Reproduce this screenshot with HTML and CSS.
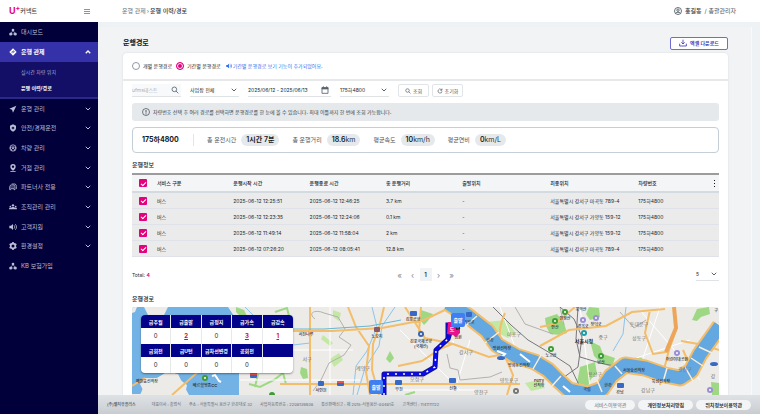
FILE: index.html
```html
<!DOCTYPE html>
<html lang="ko">
<head>
    <meta charset="UTF-8">
    <meta name="viewport" content="width=device-width, initial-scale=1.0">
    <title>U+ 커넥트 - 운행경로</title>
    <link rel="stylesheet" href="styles.css">
</head>
<body>
    <!-- shared icons -->
    <svg class="defs" aria-hidden="true">
        <symbol id="i-down" viewBox="0 0 24 24"><path d="M3 7l9 9 9-9" fill="none" stroke="currentColor" stroke-width="4"/></symbol>
        <symbol id="i-up" viewBox="0 0 24 24"><path d="M3 17l9-9 9 9" fill="none" stroke="currentColor" stroke-width="5"/></symbol>
        <symbol id="i-nodes" viewBox="0 0 24 24"><path d="M12 7L5 18h14z" fill="none" stroke="currentColor" stroke-width="2"/><circle cx="12" cy="6" r="4" fill="currentColor"/><circle cx="5" cy="18" r="4.500" fill="currentColor"/><circle cx="19" cy="18" r="4.500" fill="currentColor"/></symbol>
        <symbol id="i-route" viewBox="0 0 24 24"><path d="M12 1l11 11-11 11L1 12z" fill="currentColor"/><path d="M9 16v-5h6M13 7.500l3.500 3.500-3.500 3.500" fill="none" stroke="#3431a9" stroke-width="2"/></symbol>
        <symbol id="i-send" viewBox="0 0 24 24"><path d="M22 2L1 11l8 3 3 9z" fill="currentColor"/></symbol>
        <symbol id="i-shield" viewBox="0 0 24 24"><path d="M12 1l9 4v7c0 6-4 9-9 11-5-2-9-5-9-11V5z" fill="currentColor"/><circle cx="12" cy="12" r="4" fill="#02003a"/><circle cx="12" cy="12" r="1.500" fill="currentColor"/></symbol>
        <symbol id="i-wheel" viewBox="0 0 24 24"><circle cx="12" cy="12" r="9.500" fill="none" stroke="currentColor" stroke-width="2.500"/><path d="M3 11c5-3 13-3 18 0M8 21c0-5-1-7-5-8M16 21c0-5 1-7 5-8" fill="none" stroke="currentColor" stroke-width="2.500"/><circle cx="12" cy="13" r="3" fill="currentColor"/></symbol>
        <symbol id="i-pin" viewBox="0 0 24 24"><path d="M12 0a8 8 0 0 1 8 8c0 5-4 9-8 12-4-3-8-7-8-12a8 8 0 0 1 8-8z" fill="currentColor"/><circle cx="12" cy="8" r="3.500" fill="#02003a"/><path d="M4 22.500h16" stroke="currentColor" stroke-width="2.500"/></symbol>
        <symbol id="i-cars" viewBox="0 0 24 24"><path d="M2 20v-9l3-5h10l3 5v9h-3v-3H5v3zM8 3h11l4 7v8" fill="none" stroke="currentColor" stroke-width="2.500"/><path d="M3 12h14" stroke="currentColor" stroke-width="2"/></symbol>
        <symbol id="i-people" viewBox="0 0 24 24"><circle cx="12" cy="7" r="3.500" fill="currentColor"/><circle cx="4" cy="11" r="2.500" fill="currentColor"/><circle cx="20" cy="11" r="2.500" fill="currentColor"/><path d="M0 19c0-5 4-5 6-4 2-4 10-4 12 0 2-1 6-1 6 4z" fill="currentColor"/></symbol>
        <symbol id="i-sound" viewBox="0 0 24 24"><path d="M1 8h5l6-5v18l-6-5H1z" fill="currentColor"/><path d="M15 7c3 3 3 7 0 10M18 3c6 5 6 13 0 18" fill="none" stroke="currentColor" stroke-width="2.500"/></symbol>
        <symbol id="i-gear" viewBox="0 0 24 24"><circle cx="12" cy="12" r="7" fill="none" stroke="currentColor" stroke-width="5"/><path d="M12 0v5M12 19v5M2 6l4 2.500M18 15.500l4 2.500M2 18l4-2.500M18 8.500L22 6" stroke="currentColor" stroke-width="5"/></symbol>
        <symbol id="i-search" viewBox="0 0 24 24"><circle cx="10" cy="10" r="7" fill="none" stroke="currentColor" stroke-width="2.500"/><path d="M15 15l7 7" stroke="currentColor" stroke-width="2.500"/></symbol>
        <symbol id="i-reset" viewBox="0 0 24 24"><path d="M20 13a8 8 0 1 1-3-7l3 2M20 2v7h-7" fill="none" stroke="currentColor" stroke-width="2.500"/></symbol>
        <symbol id="i-cal" viewBox="0 0 24 24"><path d="M3 5h18v17H3z" fill="none" stroke="currentColor" stroke-width="2.500"/><path d="M2 4h20v6H2z" fill="currentColor"/><path d="M7 1v4M17 1v4" stroke="currentColor" stroke-width="3"/></symbol>
        <symbol id="i-info" viewBox="0 0 24 24"><circle cx="12" cy="12" r="10.500" fill="none" stroke="currentColor" stroke-width="2"/><path d="M12 6v8M12 16v3" stroke="currentColor" stroke-width="2.500"/></symbol>
        <symbol id="i-user" viewBox="0 0 24 24"><circle cx="12" cy="12" r="10.500" fill="none" stroke="currentColor" stroke-width="2.500"/><circle cx="12" cy="9.500" r="3.500" fill="none" stroke="currentColor" stroke-width="2.500"/><path d="M5 19c2-5 12-5 14 0" fill="none" stroke="currentColor" stroke-width="3"/></symbol>
        <symbol id="i-download" viewBox="0 0 24 24"><path d="M12 2v13M7 10l5 5 5-5M2 14v7h20v-7" fill="none" stroke="currentColor" stroke-width="2.500"/></symbol>
    </svg>

    <aside class="sidebar">
        <div class="brand">
            <span class="logo">U<sup>+</sup></span>
            <span class="logo-name">커넥트</span>
            <button class="menu-toggle" aria-label="메뉴"><i></i><i></i><i></i></button>
        </div>
        <nav>
            <a href="#" class="nav-item"><svg class="icon"><use href="#i-nodes"/></svg><span>대시보드</span></a>
            <a href="#" class="nav-item active"><svg class="icon"><use href="#i-route"/></svg><span>운행 관제</span><svg class="chev"><use href="#i-up"/></svg></a>
            <div class="submenu">
                <a href="#">실시간 차량 위치</a>
                <a href="#" class="current">운행 이력/경로</a>
            </div>
            <div class="nav-group">
                <a href="#" class="nav-item"><svg class="icon"><use href="#i-send"/></svg><span>운행 관리</span><svg class="chev"><use href="#i-down"/></svg></a>
                <a href="#" class="nav-item"><svg class="icon"><use href="#i-shield"/></svg><span>안전/경제운전</span><svg class="chev"><use href="#i-down"/></svg></a>
                <a href="#" class="nav-item"><svg class="icon"><use href="#i-wheel"/></svg><span>차량 관리</span><svg class="chev"><use href="#i-down"/></svg></a>
                <a href="#" class="nav-item"><svg class="icon"><use href="#i-pin"/></svg><span>거점 관리</span><svg class="chev"><use href="#i-down"/></svg></a>
                <a href="#" class="nav-item"><svg class="icon"><use href="#i-cars"/></svg><span>파트너사 전용</span><svg class="chev"><use href="#i-down"/></svg></a>
                <a href="#" class="nav-item"><svg class="icon"><use href="#i-people"/></svg><span>조직관리 관리</span><svg class="chev"><use href="#i-down"/></svg></a>
                <a href="#" class="nav-item"><svg class="icon"><use href="#i-sound"/></svg><span>고객지원</span><svg class="chev"><use href="#i-down"/></svg></a>
                <a href="#" class="nav-item"><svg class="icon"><use href="#i-gear"/></svg><span>환경설정</span><svg class="chev"><use href="#i-down"/></svg></a>
                <a href="#" class="nav-item"><svg class="icon"><use href="#i-nodes"/></svg><span>KB 보험가입</span></a>
            </div>
        </nav>
    </aside>

    <div class="page">
        <header class="topbar">
            <div class="breadcrumb"><a href="#">운행 관제</a><span class="sep">›</span><strong>운행 이력/경로</strong></div>
            <div class="user"><svg class="icon"><use href="#i-user"/></svg><b>홍길동</b><span>/ 총괄관리자</span></div>
        </header>

        <main class="content">
            <div class="panel">
                <div class="title-row">
                    <h1>운행경로</h1>
                    <button class="excel"><svg class="icon"><use href="#i-download"/></svg>엑셀 다운로드</button>
                </div>

                <div class="card">
                    <div class="mode-row">
                        <label><input type="radio" name="mode">개별 운행경로</label>
                        <label><input type="radio" name="mode" checked>기간별 운행경로</label>
                        <span class="news"><svg><use href="#i-sound"/></svg>기간별 운행경로 보기 기능이 추가되었어요.</span>
                    </div>

                    <div class="card-body">
                        <form class="filters">
                            <div class="field search"><input type="text" placeholder="ufms테스트" aria-label="검색"><svg class="icon"><use href="#i-search"/></svg></div>
                            <div class="field"><select aria-label="사업장"><option>사업장 전체</option></select><svg class="chev"><use href="#i-down"/></svg></div>
                            <div class="field date"><input type="text" value="2025/06/12 - 2025/06/13" aria-label="기간"><svg class="icon"><use href="#i-cal"/></svg></div>
                            <div class="field"><select aria-label="차량"><option>175하4800</option></select><svg class="chev"><use href="#i-down"/></svg></div>
                            <div class="buttons">
                                <button type="button"><svg><use href="#i-search"/></svg>조회</button>
                                <button type="button"><svg><use href="#i-reset"/></svg>초기화</button>
                            </div>
                        </form>

                        <p class="notice"><svg class="icon"><use href="#i-info"/></svg>차량번호 선택 후 여러 경로를 선택하면 운행경로를 한 눈에 볼 수 있습니다. 최대 이틀까지 한 번에 조회 가능합니다.</p>

                        <div class="summary">
                            <strong class="car">175하4800</strong>
                            <div class="stat">총 운전시간<span class="pill"><b>1시간 7분</b></span></div>
                            <div class="stat">총 운행거리<span class="pill"><b>18.6</b>km</span></div>
                            <div class="stat">평균속도<span class="pill"><b>10</b>km/h</span></div>
                            <div class="stat">평균연비<span class="pill"><b>0</b>km/L</span></div>
                        </div>

                        <h2>운행정보</h2>
                        <table class="trips">
                            <thead>
                                <tr>
                                    <th class="c-check"><input type="checkbox" checked aria-label="전체 선택"></th>
                                    <th class="c-time">서비스 구분</th>
                                    <th class="c-time">운행시작 시간</th>
                                    <th class="c-time">운행종료 시간</th>
                                    <th class="c-time">총 운행거리</th>
                                    <th class="c-place">출발위치</th>
                                    <th class="c-place">최종위치</th>
                                    <th>차량번호</th>
                                    <th class="c-more"><button class="more" aria-label="더보기"><i></i><i></i><i></i></button></th>
                                </tr>
                            </thead>
                            <tbody>
                                <tr><td class="c-check"><input type="checkbox" checked aria-label="선택"></td><td>버스</td><td>2025-06-12 12:25:51</td><td>2025-06-12 12:46:25</td><td>3.7 km</td><td>-</td><td>서울특별시 강서구 마곡동 789-4</td><td colspan="2">175하4800</td></tr>
                                <tr><td class="c-check"><input type="checkbox" checked aria-label="선택"></td><td>버스</td><td>2025-06-12 12:23:35</td><td>2025-06-12 12:24:06</td><td>0.1 km</td><td>-</td><td>서울특별시 강서구 가양동 159-12</td><td colspan="2">175하4800</td></tr>
                                <tr><td class="c-check"><input type="checkbox" checked aria-label="선택"></td><td>버스</td><td>2025-06-12 11:49:14</td><td>2025-06-12 11:58:04</td><td>2 km</td><td>-</td><td>서울특별시 강서구 가양동 159-12</td><td colspan="2">175하4800</td></tr>
                                <tr><td class="c-check"><input type="checkbox" checked aria-label="선택"></td><td>버스</td><td>2025-06-12 07:26:20</td><td>2025-06-12 08:05:41</td><td>12.8 km</td><td>-</td><td>서울특별시 강서구 마곡동 789-4</td><td colspan="2">175하4800</td></tr>
                            </tbody>
                        </table>

                        <div class="table-foot">
                            <span>Total: <b class="count">4</b></span>
                            <div class="pager">
                                <button aria-label="처음">«</button>
                                <button aria-label="이전">‹</button>
                                <button class="on">1</button>
                                <button aria-label="다음">›</button>
                                <button aria-label="마지막">»</button>
                            </div>
                            <div class="field size"><select aria-label="페이지 크기"><option>5</option></select><svg class="chev"><use href="#i-down"/></svg></div>
                        </div>

                        <h2>운행경로</h2>
                        <div class="map">
                            <svg viewBox="132 307 587 88" preserveAspectRatio="xMinYMin slice">
                                <rect x="132" y="307" width="587" height="88" fill="#ecebe8"/>
                                <!-- sea -->
                                <path d="M132 307h96l8 12 4 20-1 56H185l2-10-8-6-4-6-10 1-8 4-12 0-5 6 5 10h-13z" fill="#72b2e4"/>
                                <path d="M144 307h24l-4 8-8 4-8-4zM132 307h5l-2 5-3 1z" fill="#ecebe8"/>
                                <path d="M140 395l4-9 10-6 11-7 13 1 5 10 6 11zM239 373h10v22h-10z" fill="#ecebe8"/>
                                <!-- parks -->
                                <g fill="#9fd884">
                                    <path d="M236 307l8 3 3 6-5 2-6-6z"/>
                                    <path d="M301 367l6 2 1 9-5 1-3-6z"/>
                                    <path d="M421 310l12 4-6 8-3 3-4-5z"/>
                                    <path d="M390 351l4 7-4 5-4-4z"/>
                                    <path d="M545 318l12-4 7 9 3 10-7 2-10-1-4-8z"/>
                                    <path d="M589 307l10 1 1 9-10 3-4-6z"/>
                                    <path d="M590 341l10 5 3 8 12 4-3 9-10-3-8-8z"/>
                                    <path d="M580 367l15-5 2 12-6 5-3 7-11-3z"/>
                                    <path d="M635 357l8 1 2 7-9 1z"/>
                                    <path d="M697 309l12-2 1 7-9 3-4 4-5-1z"/>
                                    <path d="M711 382l8 1v12h-7z"/>
                                    <path d="M548 372l9-2-3 7z"/>
                                </g>
                                <g fill="#c3e8a4">
                                    <path d="M330 359l9-6 4 7-9 7zM333 310l8 3-2 8-6-4zM486 322l20-2 10 13-8 5-12-6zM525 383l14-3 6 8-14 3zM323 335l10 8-3 3-9-7z"/>
                                </g>
                                <g fill="none" stroke="#9fd884" stroke-width="2">
                                    <path d="M249 384l11 3 14-7 9-7 3 11M258 374l-3 13"/>
                                    <path d="M275 312l12-4 3 12M405 395l10-3"/>
                                </g>
                                <!-- streams -->
                                <g fill="none" stroke="#8cc3ea" stroke-width="1">
                                    <path d="M245 307l17 17 14 15 9 10 8-4 17-2M372 307l5 20-10 24-11 15-3 29M395 307l-13 19-3 20-14 22-8 27M626 307l-3 27-10 17"/>
                                </g>
                                <!-- small roads -->
                                <g fill="none" stroke="#fff" stroke-width="1">
                                    <path d="M293 350h60M240 380h120M330 307v88M400 330l60 60M470 340l-15 50M500 307l15 40M640 310l60 70M660 307l-20 60M580 307l10 80M690 340l-60 20M395 390h80"/>
                                </g>
                                <g fill="none" stroke="#b3b1ad" stroke-width="1">
                                    <path d="M315 319c-8-6 0-10 9-6l14 4 7 12-6 8 12 8-7 10-15 8-8 17-8 11M447 354l3 14 8 2 2 10 30-3 12-5M515 307l10 17 28 10M560 307l4 18M620 312l14 16 12-8"/>
                                </g>
                                <!-- rail -->
                                <g fill="none" stroke="#77777b" stroke-width="1">
                                    <path d="M493 307l18 18 17 15 22 13 20 13 10 21 18 8M578 307l-2 32 4 18 20 6 24 5M560 307l14 12 8 18-4 30-18 13"/>
                                </g>
                                <!-- main roads -->
                                <g fill="none" stroke="#f3bd69" stroke-width="2">
                                    <path d="M172 395l28-25M292 331h40l50-3 42-8 25-12M348 307l8 20 13 19-3 26 4 23M384 307l-4 17-7 20-1 26 7 25M310 307v88M132 386l13-8M280 384h240M405 307l20 31 28 6 36 13 16-3M505 313c-8 18-6 28-1 41l9 21-6 20M398 366l24-5 18-12 12-5M421 307l-2 25M540 346l29-16 37-4 26-14 33-3M575 307l-20 17-15 3M650 310l-5 23 8 21 13-2 10-24-2-21M660 385l9-35 7-20M683 350l8 18M719 350l-15-5-23-4"/>
                                </g>
                                <path d="M674 307l2 21-10 24" fill="none" stroke="#eda55a" stroke-width="4"/>
                                <path d="M292 329l32 0 46-3 31-6" fill="none" stroke="#69b6d4" stroke-width="1"/>
                                <!-- han river -->
                                <g fill="none" stroke-linejoin="round">
                                    <path d="M448 303l20 13 19 15 10 14 19 11 19 6 13 8 11 11 10 9 19 4 14-5 9-13 14-11 20 3 20 7 15 3 11-7 9-17 10-14 10-14" stroke="#f3bd69" stroke-width="17"/>
                                    <path d="M448 303l20 13 19 15 10 14 19 11 19 6 13 8 11 11 10 9 19 4 14-5 9-13 14-11 20 3 20 7 15 3 11-7 9-17 10-14 10-14" stroke="#64a8e2" stroke-width="13"/>
                                </g>
                                <path d="M463 328l14-12M485 343l14-11M533 369l8-14M552 386l9-10M602 392l-5-12M622 374l-7-8M663 382l4-14M693 381l-8-14M703 366l-12-8M699 347l13 6" stroke="#f7eedc" stroke-width="1.500" fill="none"/>
                                <path d="M497 351l8 3-3 3M520 354l10 8M563 386l7 6" stroke="#fff" stroke-width="2" fill="none"/>

                                <!-- points of interest -->
                                <g fill="#3f9b37">
                                    <circle cx="205" cy="378" r="3"/><circle cx="272" cy="395" r="3"/><circle cx="555" cy="321" r="3"/><circle cx="565" cy="312" r="3"/><circle cx="551" cy="349" r="3"/><circle cx="601" cy="356" r="3"/>
                                </g>
                                <g fill="#9a8fd6">
                                    <circle cx="583" cy="320" r="3"/><circle cx="596" cy="318" r="3"/><circle cx="677" cy="353" r="3"/><circle cx="710" cy="390" r="3"/>
                                </g>
                                <circle cx="421" cy="334" r="3" fill="#3b65ad"/>
                                <circle cx="584" cy="333" r="3" fill="#1f9ca8"/>
                                <circle cx="516" cy="391" r="3" fill="#777"/>
                                <g fill="#fff">
                                    <circle cx="205" cy="378" r="1"/><circle cx="555" cy="321" r="1"/><circle cx="565" cy="312" r="1"/><circle cx="551" cy="349" r="1"/><circle cx="601" cy="356" r="1"/><circle cx="583" cy="320" r="1"/><circle cx="596" cy="318" r="1"/><circle cx="677" cy="353" r="1"/><circle cx="710" cy="390" r="1"/><circle cx="421" cy="334" r="1"/><circle cx="584" cy="333" r="1"/><circle cx="516" cy="391" r="1"/>
                                </g>
                                <path d="M212 376l3-1 4 6 2 1" stroke="#fff" stroke-width="2" fill="none"/>
                                <g fill="#3869c4">
                                    <rect x="250" y="373" width="7" height="5" rx="1"/><rect x="318" y="381" width="6" height="5" rx="1"/><rect x="337" y="381" width="7" height="5" rx="1"/><rect x="395" y="380" width="7" height="5" rx="1"/><rect x="449" y="378" width="7" height="5" rx="1"/><rect x="410" y="311" width="7" height="5" rx="1"/><rect x="466" y="312" width="6" height="5" rx="1"/><rect x="617" y="383" width="7" height="5" rx="1"/>
                                    <ellipse cx="501" cy="358" rx="4" ry="2"/><ellipse cx="714" cy="364" rx="4" ry="2"/>
                                </g>
                                <rect x="374" y="327" width="6" height="5" rx="1" fill="#8a5b66"/>
                                <path d="M250 373h7v2h-7zM337 381h7v2h-7z" fill="#e5564c"/>

                                <g class="district">
                                    <text x="307" y="361">서구</text>
                                    <text x="363" y="370">계양구</text>
                                    <text x="417" y="381">오정구</text>
                                    <text x="466" y="354">강서구</text>
                                    <text x="514" y="336">마포구</text>
                                    <text x="509" y="382">영등포구</text>
                                    <text x="481" y="394">양천구</text>
                                    <text x="603" y="339">중구</text>
                                    <text x="639" y="326">동대문구</text>
                                    <text x="639" y="340">성동구</text>
                                    <text x="595" y="376">용산구</text>
                                    <text x="685" y="371">광진구</text>
                                    <text x="648" y="392">강남구</text>
                                    <text x="713" y="378">강</text>
                                </g>
                                <g class="place">
                                    <text x="147" y="383">메인효선착장</text>
                                    <text x="205" y="387">베르힐영종CC</text>
                                    <text x="306" y="336">서천나루</text>
                                    <text x="321" y="392">서인천</text>
                                    <text x="413" y="321">김포공항</text>
                                    <text x="377" y="338">노오지</text>
                                    <text x="421" y="343">김포국제공항</text>
                                    <text x="421" y="348">(국제선)</text>
                                    <text x="399" y="391">부천</text>
                                    <text x="453" y="390">신월</text>
                                    <text x="469" y="324">가양교</text>
                                    <text x="458" y="339">염원</text>
                                    <text x="490" y="342">한강</text>
                                    <text x="502" y="350">망원선착장</text>
                                    <text x="519" y="367">양화동선착장</text>
                                    <text x="539" y="382">Ferry</text>
                                    <text x="539" y="387">선착장</text>
                                    <text x="581" y="311">북악산</text>
                                    <text x="565" y="320">인왕산</text>
                                    <text x="555" y="329">안산</text>
                                    <text x="583" y="328">경복궁</text>
                                    <text x="596" y="326">창덕궁</text>
                                    <text x="551" y="357">노고산</text>
                                    <text x="601" y="364">남산</text>
                                    <text x="634" y="372">서울숲선착장</text>
                                    <text x="661" y="383">뚝섬선착장</text>
                                    <text x="677" y="361">어린이대공원</text>
                                    <text x="608" y="387">한강</text>
                                    <text x="587" y="391">국립</text>
                                    <text x="620" y="394">강남</text>
                                    <text x="716" y="312">구</text>
                                    <text x="584" y="343" class="city">서울시청</text>
                                </g>

                                <!-- driven route -->
                                <path d="M384 398v-24h39l12-7 1-17 12-11 4-13" fill="none" stroke="#11118c" stroke-width="5" stroke-linejoin="round"/>
                                <path d="M384 398v-24h39l12-7 1-17 12-11 4-13" fill="none" stroke="#0b0bf0" stroke-width="3" stroke-linejoin="round"/>
                                <path d="M384 395v-21h39l12-7 1-17 12-11 6 3" fill="none" stroke="#fff" stroke-width="1.500" stroke-dasharray="2 6"/>
                                <path d="M447 338v-14h4" fill="none" stroke="#0b0bb8" stroke-width="3"/>
                                <g class="marker">
                                    <path d="M448 322h12v11l-4 4-3-2-6-1z" fill="#e6138c"/>
                                    <text x="452" y="331">도</text>
                                    <path d="M456 329l4-1" stroke="#222" stroke-width="2"/>
                                    <path d="M453 313h10a2 2 0 0 1 2 2v10a2 2 0 0 1-2 2h-4l-1 2-1-2h-4a2 2 0 0 1-2-2v-10a2 2 0 0 1 2-2z" fill="#3f7ff2"/>
                                    <text x="458" y="322">출발</text>
                                    <path d="M371 380h10a2 2 0 0 1 2 2v10a2 2 0 0 1-2 2h-10a2 2 0 0 1-2-2v-10a2 2 0 0 1 2-2z" fill="#3f7ff2"/>
                                    <text x="376" y="389">출발</text>
                                </g>
                            </svg>

                            <table class="events">
                                <tr><th>급추월</th><th>급출발</th><th>급정지</th><th>급가속</th><th>급감속</th></tr>
                                <tr><td>0</td><td><a href="#">2</a></td><td>0</td><td><a href="#">3</a></td><td><a href="#">1</a></td></tr>
                                <tr><th>급회전</th><th>급U턴</th><th>급차선변경</th><th>공회전</th><th></th></tr>
                                <tr><td>0</td><td>0</td><td>0</td><td>0</td><td></td></tr>
                            </table>
                        </div>
                    </div>
                </div>
            </div>
        </main>

        <footer class="footer">
            <b>(주)엘지유플러스</b>
            <div class="company">
                <span>대표이사 : 홍범식</span>
                <span>주소 : 서울특별시 용산구 한강대로 32</span>
                <span>사업자등록번호 : 2208139938</span>
                <span>통신판매신고 : 제 2015-서울용산-00481호</span>
                <span>고객센터 : 1141111122</span>
            </div>
            <div class="links">
                <a href="#">서비스이용약관</a>
                <a href="#" class="strong">개인정보처리방침</a>
                <a href="#" class="strong">위치정보이용약관</a>
            </div>
        </footer>
    </div>
</body>
</html>
```
FILE: styles.css
```css
* {
    box-sizing: border-box;
}

body {
    margin: 0;
    height: 100vh;
    display: flex;
    overflow: hidden;
    font-family: Inter, "Noto Sans CJK KR", sans-serif;
    font-size: 5px;
    line-height: 8px;
    color: #22282e;
    background-color: #eef2f5;
}

h1, h2, p {
    margin: 0;
}

a {
    color: inherit;
    text-decoration: none;
}

button, input, select {
    font: inherit;
    color: inherit;
    margin: 0;
    padding: 0;
    border: 0;
    background: none;
}

svg {
    display: block;
    flex: none;
}

.defs {
    position: absolute;
    width: 0;
    height: 0;
}

.icon {
    width: 8px;
    height: 8px;
}

.chev {
    width: 6px;
    height: 6px;
}

/* sidebar */
.sidebar {
    flex: none;
    width: 98px;
    background-color: #02003a;
    color: #bcbcd6;
    font-size: 6px;
}

.brand {
    height: 22px;
    display: flex;
    align-items: center;
    padding: 0 8px 0 9px;
    background-color: #fff;
}

.logo {
    color: #e6007e;
    font-size: 9px;
    font-weight: 700;
}

.logo sup {
    font-size: 7px;
    line-height: 0;
    vertical-align: 3px;
}

.logo-name {
    color: #3a3f46;
    font-weight: 500;
}

.menu-toggle {
    margin-left: auto;
    width: 6px;
    display: grid;
    gap: 1px;
}

.menu-toggle i {
    height: 1px;
    background-color: #8b939b;
}

.nav-item {
    height: 20px;
    display: flex;
    align-items: center;
    gap: 4px;
    padding: 0 7px 0 9px;
}

.nav-item .chev {
    margin-left: auto;
}

.nav-item.active {
    background-color: #3431a9;
    color: #fff;
    font-weight: 700;
}

.submenu {
    height: 37px;
    padding: 2px 0 0 21px;
    background-color: #130f66;
    border-bottom: 2px solid #2b2887;
    font-size: 5px;
}

.submenu a {
    display: block;
    line-height: 16px;
    color: #a9a8d2;
}

.submenu .current {
    color: #fff;
    font-weight: 700;
}

.nav-group {
    height: 177px;
    display: grid;
    grid-auto-rows: 1fr;
}

.nav-group .nav-item {
    height: auto;
}

/* page */
.page {
    flex: 1;
    min-width: 0;
    display: flex;
    flex-direction: column;
}

.topbar {
    flex: none;
    height: 22px;
    display: flex;
    align-items: center;
    justify-content: space-between;
    padding: 0 24px;
    background-color: #fff;
    font-size: 6px;
}

.breadcrumb {
    display: flex;
    color: #6b747c;
}

.breadcrumb .sep {
    margin: 0 1px;
}

.breadcrumb strong {
    color: #2b3138;
    font-weight: 500;
}

.user {
    display: flex;
    align-items: center;
    gap: 3px;
    color: #4a5560;
}

.user b {
    color: #2b3138;
    font-weight: 500;
}

.content {
    flex: 1;
    min-height: 0;
    padding: 5px 8px 0 0;
    display: flex;
}

.panel {
    flex: 1;
    min-width: 0;
    display: flex;
    flex-direction: column;
    padding: 9px 23px 0 25px;
    background-color: #f1f3f5;
    border-right: 1px solid #f7f9fa;
}

.title-row {
    height: 14px;
    margin-bottom: 3px;
    display: flex;
    align-items: center;
    justify-content: space-between;
}

h1 {
    font-size: 7px;
    font-weight: 700;
    color: #14181c;
}

.excel {
    width: 58px;
    height: 13px;
    display: flex;
    align-items: center;
    justify-content: center;
    gap: 3px;
    border: 1px solid #6f6cd2;
    border-radius: 2px;
    background-color: #fff;
    color: #3c38b4;
    font-weight: 700;
}

.card {
    flex: 1;
    min-height: 0;
    display: flex;
    flex-direction: column;
    background-color: #fff;
    border-radius: 4px 4px 0 0;
    box-shadow: 0 0 2px #d3d8dc;
}

.mode-row {
    flex: none;
    height: 28px;
    padding: 0 9px;
    display: flex;
    align-items: center;
    gap: 4px;
    border-bottom: 2px solid #e6e8ea;
}

.mode-row label {
    display: flex;
    align-items: center;
    gap: 3px;
}

input[type="radio"] {
    appearance: none;
    width: 8px;
    height: 8px;
    border: 1px solid #8f9aa5;
    border-radius: 50%;
    background-color: #fff;
}

input[type="radio"]:checked {
    border-color: #e6007e;
    background-color: #e6007e;
    box-shadow: inset 0 0 0 1px #fff;
}

.news {
    margin-left: 1px;
    display: flex;
    align-items: center;
    gap: 1px;
    color: #2f73f0;
}

.news svg,
.buttons svg {
    width: 6px;
    height: 6px;
}

.card-body {
    flex: 1;
    min-height: 0;
    padding: 3px 9px 0;
    display: flex;
    flex-direction: column;
}

/* filters */
.filters {
    height: 13px;
    margin-bottom: 6px;
    display: flex;
    gap: 9px;
}

.field {
    width: 49px;
    height: 13px;
    display: flex;
    align-items: center;
    padding-right: 2px;
    border-bottom: 1px solid #dfe3e6;
}

.field input,
.field select {
    flex: 1;
    min-width: 0;
    width: 100%;
    height: 12px;
    appearance: none;
    outline: none;
}

.field .icon,
.field .chev {
    color: #56626e;
}

.field.search {
    background-color: #f8f9fa;
}

.field.search input::placeholder {
    color: #a9b0b7;
    opacity: 1;
}

.field.date {
    width: 83px;
}

.buttons {
    display: flex;
    gap: 3px;
}

.buttons button {
    width: 31px;
    display: flex;
    align-items: center;
    justify-content: center;
    gap: 2px;
    border: 1px solid #e2e5e8;
    border-radius: 2px;
    color: #4a5560;
}

.notice {
    height: 18px;
    margin-bottom: 6px;
    padding-left: 10px;
    display: flex;
    align-items: center;
    gap: 3px;
    border-radius: 3px;
    background-color: #e5e9ec;
    color: #333d47;
}

.summary {
    height: 26px;
    padding-left: 9px;
    display: flex;
    align-items: center;
    border: 1px solid #c3ced6;
    border-radius: 4px;
    font-size: 6px;
    color: #4a5560;
}

.car {
    width: 52px;
    margin-right: 13px;
    line-height: 12px;
    border-right: 1px solid #e2e5e8;
    font-size: 7px;
    color: #14181c;
}

.stat {
    margin-right: 13px;
    display: flex;
    align-items: center;
    gap: 5px;
}

.pill {
    padding: 0 5px;
    border-radius: 6px;
    background-color: #e5e9ec;
    font-size: 7px;
    line-height: 12px;
    color: #2b3138;
}

.pill b {
    font-weight: 600;
    color: #14181c;
}

h2 {
    padding-top: 4px;
    font-size: 6px;
    font-weight: 500;
    line-height: 16px;
    color: #14181c;
}

/* trips table */
.trips {
    width: 100%;
    table-layout: fixed;
    border-spacing: 0;
    border-top: 2px solid #9c9c9e;
}

.trips th,
.trips td {
    padding: 0;
    text-align: left;
    font-weight: 400;
    white-space: nowrap;
}

.trips th {
    height: 18px;
    background-color: #f3f5f7;
    border-bottom: 2px solid #d3dbe0;
    font-weight: 500;
}

.trips td {
    height: 16px;
    background-color: #ebebeb;
    border-bottom: 1px solid #e0e2ea;
}

.trips .c-check {
    width: 25px;
    padding-left: 7px;
}

.c-time {
    width: 13%;
}

.c-place {
    width: 15%;
}

.c-more {
    width: 9px;
}

.more {
    width: 8px;
    display: grid;
    justify-content: center;
    gap: 2px;
}

.more i {
    width: 1px;
    height: 1px;
    background-color: #14181c;
}

input[type="checkbox"] {
    appearance: none;
    display: grid;
    place-items: center;
    width: 8px;
    height: 8px;
    border-radius: 1px;
    background-color: #e6007e;
}

input[type="checkbox"]:checked::before {
    content: "";
    width: 4px;
    height: 2px;
    border: solid #fff;
    border-width: 0 0 1px 1px;
    transform: rotate(-45deg);
}

.table-foot {
    height: 13px;
    margin: 11px 0 6px;
    display: grid;
    grid-template-columns: 1fr auto 1fr;
    align-items: center;
}

.count {
    color: #e6007e;
}

.pager {
    display: flex;
    gap: 1px;
}

.pager button {
    width: 12px;
    height: 13px;
    font-size: 8px;
    color: #7d8995;
}

.pager .on {
    background-color: #f1f3f5;
    font-size: 6px;
    font-weight: 600;
    color: #2b3138;
}

.field.size {
    width: 23px;
    justify-self: end;
}

/* map */
.map {
    position: relative;
    flex: 1;
    min-height: 0;
    overflow: hidden;
    border-radius: 3px 3px 0 0;
}

.map > svg {
    width: 100%;
    height: 100%;
}

.place text {
    font-size: 4px;
    font-weight: 500;
    text-anchor: middle;
    fill: #26262c;
}

.place .city {
    font-size: 5px;
    font-weight: 700;
}

.district text {
    font-size: 5px;
    text-anchor: middle;
    fill: #7b766f;
}

.marker text {
    font-size: 5px;
    font-weight: 700;
    text-anchor: middle;
    fill: #fff;
}

.events {
    position: absolute;
    top: 8px;
    left: 9px;
    width: 152px;
    table-layout: fixed;
    border-spacing: 0;
    border-radius: 4px;
    overflow: hidden;
    background-color: #fff;
    box-shadow: 0 1px 2px rgba(0, 0, 0, 0.4);
    text-align: center;
}

.events th,
.events td {
    padding: 0;
    border-right: 1px solid #e6e8ea;
}

.events th {
    height: 13px;
    background-color: #02028a;
    color: #fff;
    font-weight: 700;
}

.events td {
    height: 16px;
    font-size: 6px;
}

.events th:last-child,
.events td:last-child {
    border-right: 0;
}

.events a {
    color: #d0112b;
    font-weight: 700;
    text-decoration: underline;
}

/* footer */
.footer {
    flex: none;
    height: 19px;
    display: flex;
    align-items: center;
    padding: 0 9px;
    background: linear-gradient(#dfe2e5, #c9cdd1);
    font-size: 4px;
    color: #636a72;
}

.footer b {
    color: #3f4a54;
    font-weight: 500;
}

.company {
    margin-left: 16px;
    display: flex;
    gap: 8px;
}

.links {
    margin-left: auto;
    display: flex;
    gap: 3px;
}

.links a {
    padding: 0 9px;
    border-radius: 5px;
    background-color: #f3f4f5;
    font-size: 5px;
    line-height: 10px;
}

.links .strong {
    color: #2b3138;
    font-weight: 700;
}
```
